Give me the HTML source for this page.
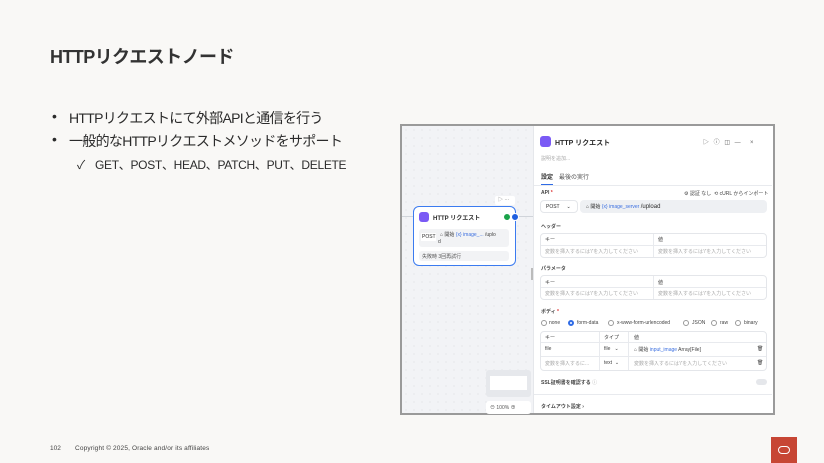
<!DOCTYPE html>
<html><head><meta charset="utf-8"><style>
*{margin:0;padding:0;box-sizing:border-box}
body{width:824px;height:463px;background:#f9f8f6;position:relative;overflow:hidden;font-family:"Liberation Sans","Noto Sans CJK JP",sans-serif;color:#2b2b2b}
.a{position:absolute;white-space:nowrap}
.s{font-size:5px;color:#444}
.ph{font-size:5px;color:#aaa}
.tb{position:absolute;border:1px solid #e4e6ea;border-radius:4px;background:#fff}
.hl{position:absolute;height:1px;background:#e8eaee}
.vl{position:absolute;width:1px;background:#e8eaee}
.rd{position:absolute;width:6px;height:6px;border:1px solid #999;border-radius:50%}
</style></head><body>
<div class="a" style="left:50px;top:43px;font-size:18px;font-weight:bold;color:#333;letter-spacing:-0.6px">HTTPリクエストノード</div>
<div class="a" style="left:52px;top:108px;font-size:14px">•</div>
<div class="a" style="left:69px;top:108px;font-size:14px;letter-spacing:-0.7px">HTTPリクエストにて外部APIと通信を行う</div>
<div class="a" style="left:52px;top:131px;font-size:14px">•</div>
<div class="a" style="left:69px;top:131px;font-size:14px;letter-spacing:-0.7px">一般的なHTTPリクエストメソッドをサポート</div>
<div class="a" style="left:77px;top:156px;font-size:12px">✓</div>
<div class="a" style="left:95px;top:156px;font-size:12px;letter-spacing:-0.3px">GET、POST、HEAD、PATCH、PUT、DELETE</div>

<div class="a" style="left:400px;top:124px;width:375px;height:291px;border:2px solid #9a9a9a;background-color:#f2f3f6;background-image:radial-gradient(#d8dbe0 0.6px,transparent 0.7px);background-size:8px 8px"></div>
<div class="a" style="left:402px;top:216px;width:131px;height:1px;background:#d0d4da"></div>
<div class="a" style="left:531px;top:268px;width:2px;height:12px;background:#bbb"></div>
<div class="a" style="left:495px;top:196px;width:20px;height:9px;background:#fff;border-radius:2px;font-size:5px;color:#777;padding-left:3px">▷ ···</div>
<div class="a" style="left:413px;top:206px;width:103px;height:60px;border:1.5px solid #3b7bf0;border-radius:6px;background:#fff"></div>
<div class="a" style="left:419px;top:212px;width:10px;height:10px;border-radius:3px;background:#7a5af5"></div>
<div class="a" style="left:433px;top:213px;font-size:6px;font-weight:bold">HTTP リクエスト</div>
<div class="a" style="left:504px;top:214px;width:6px;height:6px;border-radius:50%;background:#1aa34a"></div>
<div class="a" style="left:511px;top:213px;width:8px;height:8px;border-radius:50%;background:#1f5fe0;border:1.5px solid #fff"></div>
<div class="a" style="left:419px;top:229px;width:90px;height:18px;background:#f2f3f5;border-radius:3px"></div>
<div class="a" style="left:421px;top:233px;width:15px;height:8px;background:#fff;font-size:5px;padding:1px 1px">POST</div>
<div class="a s" style="left:440px;top:231px">⌂ 開始 <span style="color:#3b6fe0">{x} image_...</span> /uplo</div>
<div class="a s" style="left:438px;top:239px">d</div>
<div class="a" style="left:419px;top:251px;width:90px;height:10px;background:#f2f3f5;border-radius:3px;font-size:5px;padding:2px 3px;color:#555">失敗時 3回再試行</div>
<div class="a" style="left:486px;top:370px;width:45px;height:27px;background:#e6e8ec;border-radius:3px"></div>
<div class="a" style="left:490px;top:376px;width:37px;height:14px;background:#fff"></div>
<div class="a" style="left:486px;top:401px;width:45px;height:13px;background:#fff;border-radius:3px;font-size:5px;color:#555;padding:3px 4px">⊖ 100% ⊕</div>

<div class="a" style="left:533px;top:126px;width:240px;height:287px;background:#fff;border-left:1px solid #e5e7eb"></div>
<div class="a" style="left:540px;top:136px;width:11px;height:11px;border-radius:3px;background:#7a5af5"></div>
<div class="a" style="left:555px;top:138px;font-size:7px;font-weight:bold">HTTP リクエスト</div>
<div class="a" style="left:703px;top:137px;font-size:6px;color:#666;word-spacing:3px">▷ ⓘ ◫ — &nbsp;×</div>
<div class="a ph" style="left:541px;top:155px">説明を追加...</div>
<div class="a" style="left:541px;top:172px;font-size:6px;font-weight:bold">設定</div>
<div class="a" style="left:559px;top:172px;font-size:6px;color:#555">最後の実行</div>
<div class="a" style="left:541px;top:184px;width:12px;height:1px;background:#2f6be6"></div>
<div class="hl" style="left:534px;top:185px;width:238px"></div>
<div class="a s" style="left:541px;top:190px;font-weight:bold">API <span style="color:#d33">*</span></div>
<div class="a s" style="left:684px;top:190px">⚙ 認証 なし &nbsp;⟲ cURL からインポート</div>
<div class="tb" style="left:540px;top:200px;width:38px;height:13px;font-size:5px;padding:3px 5px">POST &nbsp; &nbsp; ⌄</div>
<div class="a" style="left:580px;top:200px;width:187px;height:13px;background:#eef0f3;border-radius:4px;font-size:5px;padding:3px 6px">⌂ 開始 <span style="color:#3b6fe0">{x} image_server</span> <span style="font-size:6px">/upload</span></div>
<div class="a s" style="left:541px;top:223px;font-weight:bold">ヘッダー</div>
<div class="tb" style="left:540px;top:233px;width:227px;height:25px"></div>
<div class="hl" style="left:541px;top:245px;width:225px"></div>
<div class="vl" style="left:653px;top:234px;height:23px"></div>
<div class="a s" style="left:545px;top:236px">キー</div><div class="a s" style="left:658px;top:236px">値</div>
<div class="a ph" style="left:545px;top:248px">変数を挿入するには'/'を入力してください</div>
<div class="a ph" style="left:658px;top:248px">変数を挿入するには'/'を入力してください</div>
<div class="a s" style="left:541px;top:265px;font-weight:bold">パラメータ</div>
<div class="tb" style="left:540px;top:275px;width:227px;height:25px"></div>
<div class="hl" style="left:541px;top:287px;width:225px"></div>
<div class="vl" style="left:653px;top:276px;height:23px"></div>
<div class="a s" style="left:545px;top:279px">キー</div><div class="a s" style="left:658px;top:279px">値</div>
<div class="a ph" style="left:545px;top:290px">変数を挿入するには'/'を入力してください</div>
<div class="a ph" style="left:658px;top:290px">変数を挿入するには'/'を入力してください</div>
<div class="a s" style="left:541px;top:308px;font-weight:bold">ボディ <span style="color:#d33">*</span></div>
<div class="rd" style="left:541px;top:320px"></div><div class="a s" style="left:549px;top:320px">none</div>
<div class="rd" style="left:568px;top:320px;border:2px solid #2f6be6"></div><div class="a s" style="left:577px;top:320px">form-data</div>
<div class="rd" style="left:608px;top:320px"></div><div class="a s" style="left:617px;top:320px">x-www-form-urlencoded</div>
<div class="rd" style="left:683px;top:320px"></div><div class="a s" style="left:692px;top:320px">JSON</div>
<div class="rd" style="left:711px;top:320px"></div><div class="a s" style="left:720px;top:320px">raw</div>
<div class="rd" style="left:735px;top:320px"></div><div class="a s" style="left:744px;top:320px">binary</div>
<div class="tb" style="left:540px;top:331px;width:227px;height:40px"></div>
<div class="hl" style="left:541px;top:342px;width:225px"></div>
<div class="hl" style="left:541px;top:356px;width:225px"></div>
<div class="vl" style="left:599px;top:332px;height:38px"></div>
<div class="vl" style="left:628px;top:332px;height:38px"></div>
<div class="a s" style="left:545px;top:334px">キー</div><div class="a s" style="left:604px;top:334px">タイプ</div><div class="a s" style="left:634px;top:334px">値</div>
<div class="a s" style="left:545px;top:346px">file</div><div class="a s" style="left:604px;top:346px">file &nbsp; ⌄</div>
<div class="a s" style="left:634px;top:346px">⌂ 開始 <span style="color:#3b6fe0">input_image</span> Array[File]</div>
<div class="a ph" style="left:545px;top:360px">変数を挿入するに...</div><div class="a s" style="left:604px;top:360px">text &nbsp;⌄</div>
<div class="a ph" style="left:634px;top:360px">変数を挿入するには'/'を入力してください</div>
<div class="a s" style="left:757px;top:346px">🗑</div><div class="a s" style="left:757px;top:360px">🗑</div>
<div class="a s" style="left:541px;top:379px;font-weight:bold">SSL証明書を確認する <span style="color:#aaa;font-weight:normal">ⓘ</span></div>
<div class="a" style="left:756px;top:379px;width:11px;height:6px;border-radius:3px;background:#e5e7eb"></div>
<div class="hl" style="left:534px;top:394px;width:238px"></div>
<div class="a s" style="left:541px;top:403px;font-weight:bold">タイムアウト設定 ›</div>

<div class="a" style="left:50px;top:445px;font-size:6.5px;color:#444">102</div>
<div class="a" style="left:75px;top:445px;font-size:6.5px;color:#444;letter-spacing:0.15px">Copyright © 2025, Oracle and/or its affiliates</div>
<div class="a" style="left:771px;top:437px;width:26px;height:26px;background:#c74634"></div>
<div class="a" style="left:778px;top:446px;width:12px;height:8px;border:1.5px solid #fff;border-radius:4px"></div>
</body></html>
